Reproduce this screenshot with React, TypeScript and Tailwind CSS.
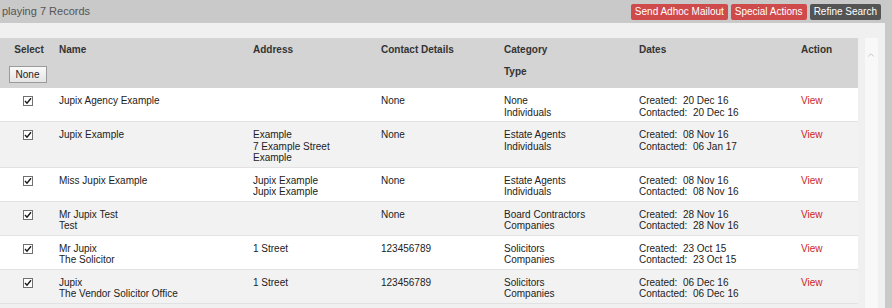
import { ChevronUp } from 'lucide-react';

type Row = {
  name: string[];
  address: string[];
  contact: string;
  category: string[];
  created: string;
  contacted: string;
};

const rows: Row[] = [
  { name: ['Jupix Agency Example'], address: [], contact: 'None', category: ['None', 'Individuals'], created: '20 Dec 16', contacted: '20 Dec 16' },
  { name: ['Jupix Example'], address: ['Example', '7 Example Street', 'Example'], contact: 'None', category: ['Estate Agents', 'Individuals'], created: '08 Nov 16', contacted: '06 Jan 17' },
  { name: ['Miss Jupix Example'], address: ['Jupix Example', 'Jupix Example'], contact: 'None', category: ['Estate Agents', 'Individuals'], created: '08 Nov 16', contacted: '08 Nov 16' },
  { name: ['Mr Jupix Test', 'Test'], address: [], contact: 'None', category: ['Board Contractors', 'Companies'], created: '28 Nov 16', contacted: '28 Nov 16' },
  { name: ['Mr Jupix', 'The Solicitor'], address: ['1 Street'], contact: '123456789', category: ['Solicitors', 'Companies'], created: '23 Oct 15', contacted: '23 Oct 15' },
  { name: ['Jupix', 'The Vendor Solicitor Office'], address: ['1 Street'], contact: '123456789', category: ['Solicitors', 'Companies'], created: '06 Dec 16', contacted: '06 Dec 16' },
];

const cols = 'grid grid-cols-[59px_194px_128px_123px_135px_162px_57px]';

function Check() {
  return (
    <span className="mt-[1px] flex h-[10px] w-[10px] items-center justify-center border border-[#707070] bg-white">
      <svg width="8" height="8" viewBox="0 0 8 8">
        <path d="M1 4 L3 6.2 L7 1.2" fill="none" stroke="#1a1a1a" strokeWidth="1.4" />
      </svg>
    </span>
  );
}

function Lines({ items }: { items: string[] }) {
  return (
    <div>
      {items.map((t, i) => (
        <div key={i}>{t}</div>
      ))}
    </div>
  );
}

export default function App() {
  return (
    <div className="flex h-[308px] w-[892px] flex-col overflow-hidden bg-[#c9c9c9] text-[10px] text-[#222]" style={{ fontFamily: '"Liberation Sans", Arial, sans-serif' }}>
      <div className="flex h-[23px] shrink-0 items-center justify-between pr-[11px]">
        <span className="ml-[2px] text-[11px] text-[#555]">playing 7 Records</span>
        <div className="flex gap-[3px]">
          <button className="h-[16px] rounded-[2px] bg-[#cf4a4a] px-[4px] text-[10px] leading-[16px] text-white">Send Adhoc Mailout</button>
          <button className="h-[16px] rounded-[2px] bg-[#cf4a4a] px-[4px] text-[10px] leading-[16px] text-white">Special Actions</button>
          <button className="h-[16px] rounded-[2px] bg-[#545454] px-[4px] text-[10px] leading-[16px] text-white">Refine Search</button>
        </div>
      </div>

      <div className="flex min-h-0 flex-1">
        <div className="flex min-w-0 flex-1 flex-col bg-[#f0f0f0]">
          <div className="h-[15px] shrink-0" />
          <div className="flex min-h-0 flex-1">
            <div className="w-[858px] shrink-0">
              <div className={`${cols} h-[50px] bg-[#d4d4d4] pt-[6px] font-bold leading-[12px] text-[#333]`}>
                <div className="flex flex-col items-center">
                  <span className="ml-[-1px]">Select</span>
                  <button className="mt-[10px] ml-[-4px] h-[17px] w-[38px] border border-[#9a9a9a] bg-gradient-to-b from-[#fafafa] to-[#e4e4e4] text-[10px] font-normal text-[#222]">None</button>
                </div>
                <div>Name</div>
                <div>Address</div>
                <div>Contact Details</div>
                <div>
                  <div>Category</div>
                  <div className="mt-[10px]">Type</div>
                </div>
                <div>Dates</div>
                <div>Action</div>
              </div>

              {rows.map((r, i) => (
                <div key={i} className={`${cols} border-b border-[#e2e2e2] pt-[7px] pb-[3px] leading-[11.5px] ${i % 2 === 0 ? 'bg-white' : 'bg-[#f2f2f2]'}`}>
                  <div className="flex justify-center pr-[3px]">
                    <Check />
                  </div>
                  <Lines items={r.name} />
                  <Lines items={r.address} />
                  <div>{r.contact}</div>
                  <Lines items={r.category} />
                  <div className="whitespace-pre">
                    <div>{`Created:  ${r.created}`}</div>
                    <div>{`Contacted:  ${r.contacted}`}</div>
                  </div>
                  <div className="text-[#cc1f1f]">View</div>
                </div>
              ))}
            </div>

            <div className="flex flex-1 justify-center pl-[1px] pr-[2px]">
              <div className="flex w-[13px] justify-center bg-[#f8f8f8] pt-[12px]">
                <ChevronUp size={10} strokeWidth={2} className="text-[#bdbdbd]" />
              </div>
            </div>
          </div>
        </div>
        <div className="w-[7px] shrink-0 bg-[#c9c9c9]" />
      </div>
    </div>
  );
}
